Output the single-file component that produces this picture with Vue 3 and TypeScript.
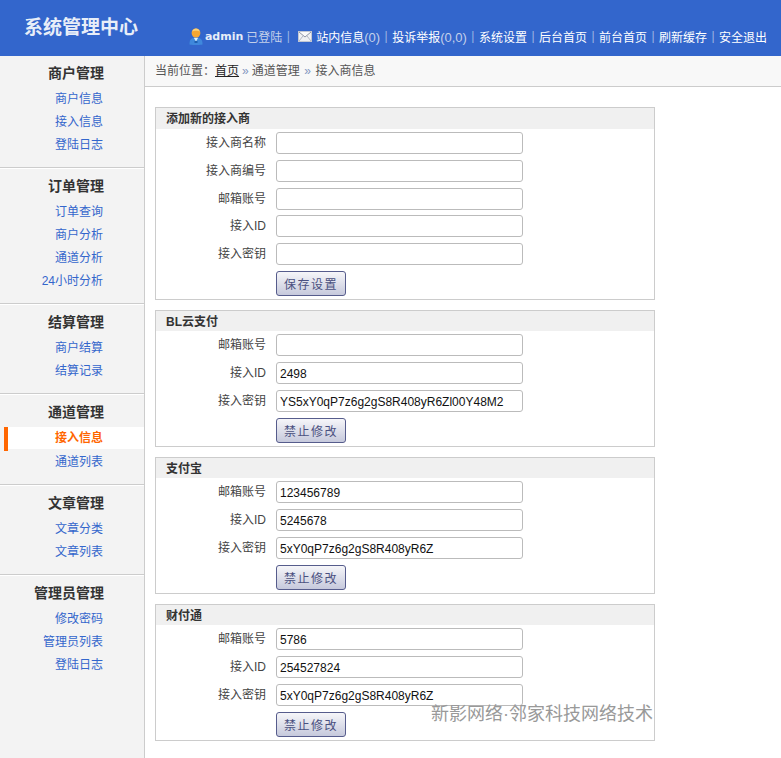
<script setup lang="ts">
interface Row { label: string; value: string }
interface Panel { title: string; button: string; rows: Row[] }
interface Section { title: string; links: { text: string; active?: boolean }[] }

const sections: Section[] = [
  { title: '商户管理', links: [{ text: '商户信息' }, { text: '接入信息' }, { text: '登陆日志' }] },
  { title: '订单管理', links: [{ text: '订单查询' }, { text: '商户分析' }, { text: '通道分析' }, { text: '24小时分析' }] },
  { title: '结算管理', links: [{ text: '商户结算' }, { text: '结算记录' }] },
  { title: '通道管理', links: [{ text: '接入信息', active: true }, { text: '通道列表' }] },
  { title: '文章管理', links: [{ text: '文章分类' }, { text: '文章列表' }] },
  { title: '管理员管理', links: [{ text: '修改密码' }, { text: '管理员列表' }, { text: '登陆日志' }] },
]

const navItems = ['系统设置', '后台首页', '前台首页', '刷新缓存', '安全退出']

const panels: Panel[] = [
  {
    title: '添加新的接入商',
    button: '保存设置',
    rows: [
      { label: '接入商名称', value: '' },
      { label: '接入商编号', value: '' },
      { label: '邮箱账号', value: '' },
      { label: '接入ID', value: '' },
      { label: '接入密钥', value: '' },
    ],
  },
  {
    title: 'BL云支付',
    button: '禁止修改',
    rows: [
      { label: '邮箱账号', value: '' },
      { label: '接入ID', value: '2498' },
      { label: '接入密钥', value: 'YS5xY0qP7z6g2gS8R408yR6Zl00Y48M2' },
    ],
  },
  {
    title: '支付宝',
    button: '禁止修改',
    rows: [
      { label: '邮箱账号', value: '123456789' },
      { label: '接入ID', value: '5245678' },
      { label: '接入密钥', value: '5xY0qP7z6g2gS8R408yR6Z' },
    ],
  },
  {
    title: '财付通',
    button: '禁止修改',
    rows: [
      { label: '邮箱账号', value: '5786' },
      { label: '接入ID', value: '254527824' },
      { label: '接入密钥', value: '5xY0qP7z6g2gS8R408yR6Z' },
    ],
  },
]
</script>

<template>
  <div class="page">
    <header class="top">
      <h1 class="brand">系统管理中心</h1>
      <nav class="nav">
        <svg class="user-icon" width="14" height="17" viewBox="0 0 14 17" aria-hidden="true">
          <path d="M0.500 16.500c0-5 1.500-7 6.500-7s6.500 2 6.500 7c-3 .7-10 .7-13 0z" fill="#3f88dc" />
          <path d="M4.800 9.800h4.400L7 13.500z" fill="#dff0fb" />
          <path d="M5.500 13h3v2h-3z" fill="#1f5fb0" />
          <ellipse cx="7" cy="5" rx="4.400" ry="4.600" fill="#f5a733" />
          <path d="M3.200 3.600C4 1.400 5.400.6 7 .6s3 .8 3.800 3C9 2.600 5 2.600 3.200 3.600z" fill="#fbd37a" />
        </svg>
        <b class="admin">admin</b>
        <span class="muted logged">已登陆</span>
        <i class="sep first">|</i>
        <svg class="mail-icon" width="14" height="11" viewBox="0 0 14 11" aria-hidden="true">
          <rect x="0.500" y="0.500" width="13" height="10" fill="#f0f1f3" stroke="#c2c7d2" />
          <path d="M1 1l6 5 6-5" fill="#fafafa" stroke="#8f96a6" />
          <path d="M1 10l4-5M13 10L9 5" fill="none" stroke="#b3b8c4" />
        </svg>
        <a class="nav-link">站内信息<span class="muted count">(0)</span></a>
        <i class="sep">|</i>
        <a class="nav-link">投诉举报<span class="muted count">(0,0)</span></a>
        <template v-for="item in navItems" :key="item">
          <i class="sep">|</i>
          <a class="nav-link">{{ item }}</a>
        </template>
      </nav>
    </header>

    <div class="body">
      <aside class="side">
        <section v-for="s in sections" :key="s.title" class="group">
          <h2 class="group-title">{{ s.title }}</h2>
          <a
            v-for="l in s.links"
            :key="l.text"
            class="side-link"
            :class="{ active: l.active }"
          >{{ l.text }}</a>
        </section>
      </aside>

      <main class="main">
        <div class="crumb">
          当前位置：<a class="home">首页</a><span class="arrow">»</span>通道管理<span class="arrow wide">»</span>接入商信息
        </div>
        <div class="content">
          <section v-for="p in panels" :key="p.title" class="panel">
            <h3 class="panel-title">{{ p.title }}</h3>
            <div class="panel-body">
              <div v-for="r in p.rows" :key="r.label" class="row">
                <label class="label">{{ r.label }}</label>
                <input class="field" type="text" :value="r.value" />
              </div>
              <div class="row btn-row">
                <span class="label"></span>
                <button class="btn" type="button">{{ p.button }}</button>
              </div>
            </div>
          </section>
        </div>
      </main>
    </div>

    <div class="watermark">新影网络·邻家科技网络技术</div>
  </div>
</template>

<style>
html, body { margin: 0; padding: 0; background: #fff; }
</style>

<style scoped>
.page {
  position: relative;
  width: 781px;
  height: 758px;
  overflow: hidden;
  font-family: "Liberation Sans", "Noto Sans CJK SC", sans-serif;
  font-size: 12px;
  color: #444;
}
.top {
  height: 56px;
  background: #3366cc;
  display: flex;
  justify-content: space-between;
  box-sizing: border-box;
  padding-right: 14px;
}
.brand {
  margin: 0;
  padding: 17px 0 0 24px;
  font-size: 19px;
  line-height: 22px;
  font-weight: 700;
  color: #e8eef8;
}
.nav {
  display: flex;
  align-items: center;
  height: 28px;
  margin-top: 22px;
  color: #fff;
  white-space: nowrap;
}
.user-icon { margin-right: 2px; }
.mail-icon { margin-right: 4px; }
.admin {
  font-family: "DejaVu Sans", sans-serif;
  font-size: 11px;
  color: #e6edf8;
  margin-right: 3px;
}
.muted { color: #c3d0ea; }
.count { font-size: 13px; }
.nav-link { color: #fff; }
.sep {
  font-style: normal;
  color: #9db5e2;
  width: 12px;
  text-align: center;
}
.sep.first { margin-right: 4px; }
.body {
  display: flex;
  height: 702px;
}
.side {
  width: 145px;
  flex: none;
  box-sizing: border-box;
  background: #f3f3f3;
  border-right: 1px solid #cccccc;
}
.group {
  padding-bottom: 10px;
  border-bottom: 1px solid #cccccc;
  box-shadow: 0 1px 0 #fff;
  margin-bottom: 1px;
}
.group:last-child { border-bottom: 0; box-shadow: none; }
.group-title {
  margin: 0;
  height: 32px;
  padding-top: 7px;
  padding-right: 40px;
  box-sizing: border-box;
  line-height: 20px;
  font-size: 14px;
  font-weight: 700;
  color: #333;
  text-align: right;
}
.side-link {
  display: block;
  height: 23px;
  line-height: 23px;
  padding-right: 41px;
  text-align: right;
  color: #3366cc;
}
.side-link.active {
  margin-left: 4px;
  border-left: 4px solid #ff6600;
  background: linear-gradient(#fff 22px, transparent 22px);
  height: 24px;
  line-height: 22px;
  font-weight: 700;
  color: #ff6600;
}
.main { flex: 1; min-width: 0; }
.crumb {
  height: 30px;
  line-height: 31px;
  padding-left: 10px;
  background: #f8f8f8;
  border-bottom: 1px solid #cccccc;
  color: #555;
}
.home { color: #222; text-decoration: underline; }
.arrow { color: #8296bf; margin: 0 3px; }
.arrow.wide { margin: 0 4.500px; }
.content {
  padding: 20px 0 0 10px;
  width: 500px;
  display: flex;
  flex-direction: column;
  gap: 10px;
}
.panel {
  border: 1px solid #cccccc;
}
.panel-title {
  margin: 0;
  height: 20px;
  line-height: 22px;
  padding-left: 10px;
  background: #f0f0f0;
  font-size: 12px;
  font-weight: 700;
  color: #333;
}
.panel:first-child .panel-title { height: 21px; }
.panel:first-child .row:nth-child(3) { height: 27px; }
.panel-body { padding: 3px 0; }
.row {
  display: flex;
  align-items: flex-start;
  height: 28px;
}
.row.btn-row { height: 25px; }
.label {
  width: 110px;
  flex: none;
  text-align: right;
  margin-right: 10px;
  line-height: 23px;
  color: #444;
}
.field {
  width: 247px;
  height: 22px;
  box-sizing: border-box;
  border: 1px solid #bbbbbb;
  border-radius: 3px;
  padding: 1px 3px 0;
  margin: 0;
  background: #fff;
  font-family: "Liberation Sans", sans-serif;
  font-size: 12px;
  color: #111;
  outline: none;
}
.btn {
  width: 70px;
  height: 25px;
  padding: 0;
  margin: 0;
  border: 1px solid #565c8c;
  border-radius: 3px;
  background: linear-gradient(#f6f6f9, #c6c9dc);
  font-family: "Liberation Sans", "Noto Sans CJK SC", sans-serif;
  font-size: 12px;
  letter-spacing: 1.500px;
  color: #4a5080;
}
.watermark {
  position: absolute;
  left: 431px;
  top: 703px;
  font-size: 18px;
  line-height: 22px;
  color: #999999;
  white-space: nowrap;
}
</style>
